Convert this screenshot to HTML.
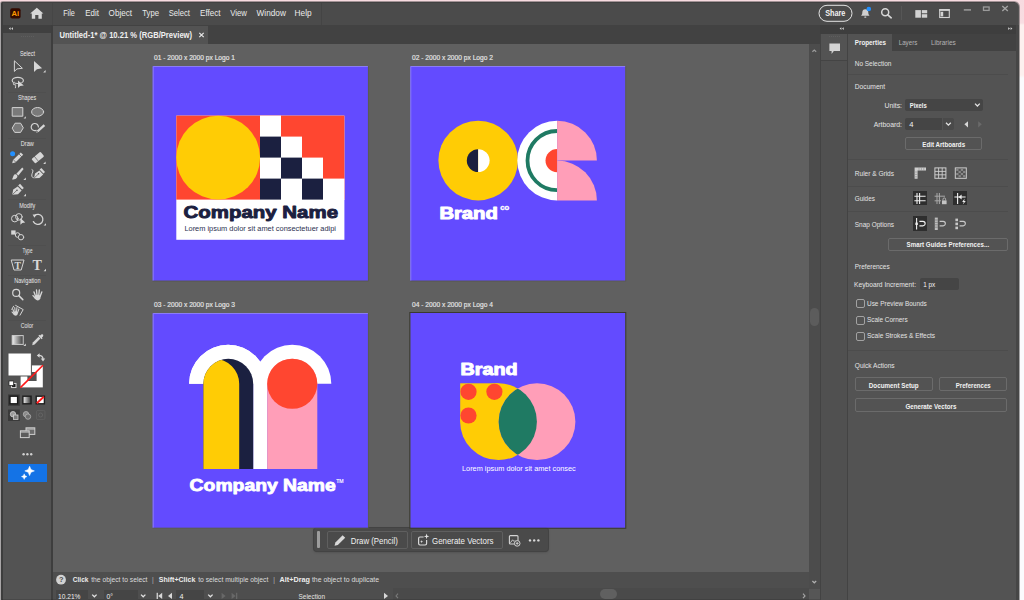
<!DOCTYPE html>
<html lang="en">
<head>
<meta charset="utf-8">
<title>Untitled-1* @ 10.21 % (RGB/Preview)</title>
<style>
*{box-sizing:border-box;margin:0;padding:0}
html,body{width:1024px;height:600px;overflow:hidden}
body{font-family:'Liberation Sans',sans-serif;background:#fff}
#app{position:relative;width:1024px;height:600px;overflow:hidden;
 background:linear-gradient(180deg,#f7dbe0 0px,#f8dde2 23px,#fdf0ef 25px,#fdf0ef 75px,#fbfbfd 78px,#fbfbfd 600px)}
.b{position:absolute}
.abs{position:absolute}
svg text{white-space:pre}
</style>
</head>
<body>
<div id="app">
<div id="win" class="b" style="left:1px;top:2px;width:1018px;height:598px;background:#535353;border-radius:2px 5px 0 0;box-shadow:0 0 0 1px rgba(60,60,60,.45)"></div>
<div class="b" style="left:0px;top:3px;width:1px;height:597px;background:#a9a6a7;"></div>
<div class="b" style="left:2px;top:3px;width:1016px;height:22px;background:#4b4b4b;border-radius:1px 4px 0 0"></div>
<div class="b" style="left:2px;top:2px;width:1013px;height:1px;background:#414141;"></div>
<div class="b" style="left:52px;top:3px;width:1px;height:22px;background:#464646;"></div>
<div class="b" style="left:321px;top:3px;width:1px;height:22px;background:#444444;"></div>
<div class="b" style="left:901px;top:6px;width:1px;height:14px;background:#565656;"></div>
<div class="b" style="left:2px;top:25px;width:50px;height:8px;background:#404040;"></div>
<div class="b" style="left:820px;top:25px;width:198px;height:9px;background:#3e3e3e;"></div>
<div class="b" style="left:52px;top:25px;width:768px;height:19px;background:#424242;"></div>
<div class="b" style="left:53px;top:26px;width:155px;height:18px;background:#535353;"></div>
<div class="b" style="left:2px;top:33px;width:49px;height:567px;background:#535353;"></div>
<div class="b" style="left:51px;top:25px;width:2px;height:575px;background:#3e3e3e;"></div>
<div class="b" style="left:1px;top:2px;width:2px;height:598px;background:#3d3d3d;border-radius:2px 0 0 0"></div>
<div class="b" style="left:53px;top:44px;width:756px;height:528px;background:#606060;"></div>
<div class="b" style="left:809px;top:44px;width:11px;height:545px;background:#4c4c4c;"></div>
<div class="b" style="left:810px;top:308px;width:9px;height:18px;background:#5c5c5c;border-radius:4.5px"></div>
<div class="b" style="left:53px;top:572px;width:756px;height:17px;background:#4e4e4e;"></div>
<div class="b" style="left:53px;top:589px;width:767px;height:11px;background:#4e4e4e;"></div>
<div class="b" style="left:393px;top:588px;width:416px;height:12px;background:#4a4a4a;"></div>
<div class="b" style="left:809px;top:589px;width:11px;height:11px;background:#565656;"></div>
<div class="b" style="left:600px;top:589.2px;width:17px;height:10px;background:#606060;border-radius:5px"></div>
<div class="b" style="left:2px;top:599px;width:1016px;height:1px;background:rgba(0,0,0,.12);"></div>
<div class="b" style="left:56px;top:590px;width:32px;height:10px;background:#454545;"></div>
<div class="b" style="left:104px;top:590px;width:34px;height:10px;background:#454545;"></div>
<div class="b" style="left:176px;top:590px;width:28px;height:10px;background:#454545;"></div>
<div class="b" style="left:820px;top:34px;width:1px;height:566px;background:#434343;"></div>
<div class="b" style="left:821px;top:34px;width:26px;height:566px;background:#505050;"></div>
<div class="b" style="left:821px;top:34px;width:26px;height:26px;background:#535353;"></div>
<div class="b" style="left:821px;top:60px;width:26px;height:1px;background:#444444;"></div>
<div class="b" style="left:847px;top:34px;width:1px;height:566px;background:#434343;"></div>
<div class="b" style="left:848px;top:34px;width:168px;height:566px;background:#535353;"></div>
<div class="b" style="left:848px;top:34px;width:168px;height:17px;background:#424242;"></div>
<div class="b" style="left:848px;top:34px;width:44px;height:18px;background:#535353;"></div>
<div class="b" style="left:1016px;top:25px;width:3px;height:575px;background:#464646;"></div>
<div class="b" style="left:848px;top:74px;width:160px;height:1px;background:#4c4c4c;"></div>
<div class="b" style="left:848px;top:159px;width:160px;height:1px;background:#4c4c4c;"></div>
<div class="b" style="left:848px;top:186px;width:160px;height:1px;background:#4c4c4c;"></div>
<div class="b" style="left:848px;top:211px;width:160px;height:1px;background:#4c4c4c;"></div>
<div class="b" style="left:848px;top:350px;width:160px;height:1px;background:#4c4c4c;"></div>
<div class="b" style="left:905px;top:99px;width:78px;height:12px;background:#454545;border-radius:2px"></div>
<div class="b" style="left:905px;top:118px;width:37px;height:12px;background:#454545;border-radius:2px 0 0 2px"></div>
<div class="b" style="left:943px;top:118px;width:11px;height:12px;background:#4a4a4a;border-radius:0 2px 2px 0"></div>
<div class="b" style="left:920px;top:278px;width:39px;height:12px;background:#454545;border-radius:2px"></div>
<div class="b" style="left:905px;top:137px;width:77px;height:13px;background:transparent;border:1px solid #6b6b6b;border-radius:2px"></div>
<div class="b" style="left:888px;top:238px;width:120px;height:13px;background:transparent;border:1px solid #6b6b6b;border-radius:2px"></div>
<div class="b" style="left:855px;top:377px;width:78px;height:14px;background:transparent;border:1px solid #6b6b6b;border-radius:2px"></div>
<div class="b" style="left:939px;top:377px;width:68px;height:14px;background:transparent;border:1px solid #6b6b6b;border-radius:2px"></div>
<div class="b" style="left:855px;top:398px;width:152px;height:14px;background:transparent;border:1px solid #6b6b6b;border-radius:2px"></div>
<div class="b" style="left:856px;top:299px;width:9px;height:9px;background:transparent;border:1px solid #a2a2a2;border-radius:2px"></div>
<div class="b" style="left:856px;top:315.5px;width:9px;height:9px;background:transparent;border:1px solid #a2a2a2;border-radius:2px"></div>
<div class="b" style="left:856px;top:331.6px;width:9px;height:9px;background:transparent;border:1px solid #a2a2a2;border-radius:2px"></div>
<div class="b" style="left:912.6px;top:190.8px;width:14.4px;height:14.2px;background:#2e2e2e;"></div>
<div class="b" style="left:952.7px;top:190.8px;width:14.4px;height:14.2px;background:#2e2e2e;"></div>
<div class="b" style="left:912.6px;top:216.2px;width:14.4px;height:14.5px;background:#2e2e2e;"></div>
<div class="b" style="left:314px;top:527.6px;width:234px;height:23.4px;background:#4a4a4a;border-radius:3px;box-shadow:0 0 0 1px #434343, 0 1px 3px rgba(0,0,0,.25)"></div>
<div class="b" style="left:317px;top:531px;width:3px;height:17px;background:#9c9c9c;border-radius:1px"></div>
<div class="b" style="left:327px;top:531px;width:81px;height:18px;background:transparent;border:1px solid #5f5f5f;border-radius:2px"></div>
<div class="b" style="left:411px;top:531px;width:92px;height:18px;background:transparent;border:1px solid #5f5f5f;border-radius:2px"></div>
<div class="b" style="left:8px;top:464px;width:39px;height:18px;background:#1473e6;"></div>
<div class="b" style="left:8px;top:92px;width:38px;height:1px;background:#4f4f4f;"></div>
<div class="b" style="left:8px;top:138px;width:38px;height:1px;background:#4f4f4f;"></div>
<div class="b" style="left:8px;top:199px;width:38px;height:1px;background:#4f4f4f;"></div>
<div class="b" style="left:8px;top:245px;width:38px;height:1px;background:#4f4f4f;"></div>
<div class="b" style="left:8px;top:275px;width:38px;height:1px;background:#4f4f4f;"></div>
<div class="b" style="left:8px;top:320px;width:38px;height:1px;background:#4f4f4f;"></div>
<div class="b" style="left:53px;top:44px;width:756px;height:528px;overflow:hidden">
<svg class="abs" style="left:0;top:0" width="756" height="528" viewBox="53 44 756 528" font-family="'Liberation Sans',sans-serif">
      <!-- artboards -->
      <g fill="#634bff">
        <rect x="152.7" y="66" width="215.3" height="214.7"/>
        <rect x="410.3" y="66" width="215" height="214.7"/>
        <rect x="152.7" y="313" width="215.3" height="214.8"/>
        <rect x="410.3" y="313" width="215" height="214.8"/>
      </g>
      <g fill="none" stroke="#8b7cf6" stroke-width="1">
        <path d="M153.2 280.7 V66.5 H368"/>
        <path d="M410.8 280.7 V66.5 H625.3"/>
        <path d="M153.2 527.8 V313.5 H368"/>
      </g>
      <g fill="none" stroke="#58584e" stroke-width="0.8" opacity=".8">
        <path d="M368.4 66 V281.1 H152.7"/>
        <path d="M625.7 66 V281.1 H410.3"/>
        <path d="M368.4 313 V528.2 H152.7"/>
      </g>
      <rect x="409.8" y="312.5" width="216" height="215.8" fill="none" stroke="#3a3a30" stroke-width="1"/>
      <g font-size="6.4" fill="#e6e6e6" stroke="#e6e6e6" stroke-width="0.15">
        <text x="154" y="60" textLength="81" lengthAdjust="spacingAndGlyphs">01 - 2000 x 2000 px Logo 1</text>
        <text x="412" y="60" textLength="81" lengthAdjust="spacingAndGlyphs">02 - 2000 x 2000 px Logo 2</text>
        <text x="154" y="307" textLength="81" lengthAdjust="spacingAndGlyphs">03 - 2000 x 2000 px Logo 3</text>
        <text x="412" y="307" textLength="81" lengthAdjust="spacingAndGlyphs">04 - 2000 x 2000 px Logo 4</text>
      </g>

      <!-- LOGO 1 -->
      <g>
        <rect x="176.3" y="115.6" width="168.1" height="124.2" fill="#ffffff"/>
        <rect x="176.3" y="115.6" width="168.1" height="84" fill="#ff4630"/>
        <circle cx="218.2" cy="157.6" r="41.9" fill="#ffcc05"/>
        <g fill="#ffffff">
          <rect x="260" y="115.6" width="21" height="84.4"/>
          <rect x="281" y="136.6" width="21" height="63.4"/>
          <rect x="302" y="157.6" width="21" height="42.4"/>
          <rect x="323" y="178.6" width="21.4" height="21.4"/>
        </g>
        <g fill="#1b2040">
          <rect x="260" y="136.6" width="21" height="21"/>
          <rect x="281" y="157.6" width="21" height="21"/>
          <rect x="260" y="178.6" width="21" height="21"/>
          <rect x="302" y="178.6" width="21" height="21"/>
        </g>
        <text x="183.6" y="217.6" font-size="16.8" font-weight="bold" fill="#1b2040" stroke="#1b2040" stroke-width="0.9" stroke-linejoin="round" textLength="154.4" lengthAdjust="spacingAndGlyphs">Company Name</text>
        <text x="184.4" y="231" font-size="6.8" fill="#2c3050" textLength="151.6" lengthAdjust="spacingAndGlyphs">Lorem ipsum dolor sit amet consectetuer adipi</text>
      </g>

      <!-- LOGO 2 -->
      <g>
        <circle cx="478.2" cy="160.6" r="39.8" fill="#ffcc05"/>
        <path d="M478.2 149.2 A11.4 11.4 0 0 0 478.2 172 Z" fill="#1b2040"/>
        <path d="M478.2 149.2 A11.4 11.4 0 0 1 478.2 172 Z" fill="#ffffff"/>
        <path d="M557.1 120.8 A39.8 39.8 0 0 0 557.1 200.4 Z" fill="#ffffff"/>
        <path d="M557.1 131 A29.6 29.6 0 0 0 557.1 190.2" fill="none" stroke="#1f7a63" stroke-width="3.8"/>
        <path d="M557.1 149 A11.6 11.6 0 0 0 557.1 172.2 Z" fill="#ff4630"/>
        <path d="M557.1 120.8 A39.8 39.8 0 0 1 596.9 160.6 L557.1 160.6 Z" fill="#ff9eb8"/>
        <path d="M557.1 160.6 A39.8 39.8 0 0 1 596.9 200.4 L557.1 200.4 Z" fill="#ff9eb8"/>
        <text x="439.4" y="218.9" font-size="16.4" font-weight="bold" fill="#ffffff" stroke="#ffffff" stroke-width="1" stroke-linejoin="round" textLength="58.4" lengthAdjust="spacingAndGlyphs">Brand</text>
        <text x="500.2" y="210.3" font-size="6.4" font-weight="bold" fill="#ffffff" stroke="#ffffff" stroke-width="0.3" textLength="9" lengthAdjust="spacingAndGlyphs">co</text>
      </g>

      <!-- LOGO 3 -->
      <g>
        <defs>
          <clipPath id="doorL"><path d="M203.4 469 L203.4 383.75 A24.9 24.9 0 0 1 253.2 383.75 L253.2 469 Z"/></clipPath>
        </defs>
        <path d="M189.1 383.75 A39.05 39.05 0 0 1 267.2 383.75 L267.2 469 L253.2 469 L253.2 383.75 Z" fill="#ffffff"/>
        <path d="M253.2 383.75 A39.05 39.05 0 0 1 331.3 383.75 L253.2 383.75 Z" fill="#ffffff"/>
        <path d="M189.1 383.75 A39.05 39.05 0 0 1 267.2 383.75 Z" fill="#ffffff"/>
        <path d="M203.4 469 L203.4 383.75 A24.9 24.9 0 0 1 253.2 383.75 L253.2 469 Z" fill="#1b2040"/>
        <path d="M189.4 469 L189.4 383.75 A24.9 24.9 0 0 1 239.2 383.75 L239.2 469 Z" fill="#ffcc05" clip-path="url(#doorL)"/>
        <path d="M267.2 469 L267.2 383.75 A25.05 25.05 0 0 1 317.3 383.75 L317.3 469 Z" fill="#ff9eb8"/>
        <circle cx="292.25" cy="383.75" r="25.05" fill="#ff4630"/>
        <text x="189.6" y="490.6" font-size="15.6" font-weight="bold" fill="#ffffff" stroke="#ffffff" stroke-width="0.8" stroke-linejoin="round" textLength="146.2" lengthAdjust="spacingAndGlyphs">Company Name</text>
        <text x="336.2" y="483.2" font-size="4.8" fill="#ffffff" stroke="#ffffff" stroke-width=".15" textLength="7.4" lengthAdjust="spacingAndGlyphs">TM</text>
      </g>

      <!-- LOGO 4 -->
      <g>
        <defs><clipPath id="yc"><circle cx="498.5" cy="421.7" r="38.4"/></clipPath></defs>
        <rect x="460.2" y="383.3" width="38.3" height="38.4" fill="#ffcc05"/>
        <circle cx="498.5" cy="421.7" r="38.4" fill="#ffcc05"/>
        <circle cx="537" cy="421.7" r="38.4" fill="#ff9eb8"/>
        <circle cx="537" cy="421.7" r="38.4" fill="#1f7a63" clip-path="url(#yc)"/>
        <circle cx="468.5" cy="391.8" r="8.1" fill="#ff4630"/>
        <circle cx="494.4" cy="391.8" r="8.1" fill="#ff4630"/>
        <circle cx="468.5" cy="415.5" r="8.1" fill="#ff4630"/>
        <text x="460.6" y="375.4" font-size="16.2" font-weight="bold" fill="#ffffff" stroke="#ffffff" stroke-width="1" stroke-linejoin="round" textLength="57" lengthAdjust="spacingAndGlyphs">Brand</text>
        <text x="462" y="470.6" font-size="6.6" fill="#ffffff" textLength="113.7" lengthAdjust="spacingAndGlyphs">Lorem ipsum dolor sit amet consec</text>
      </g>
    </svg>
</div>
<svg id="ov" class="b" style="left:0;top:0" width="1024" height="600" viewBox="0 0 1024 600" font-family="'Liberation Sans',sans-serif">
<text x="63.2" y="16.36" font-size="9.6" fill="#eaeaea" textLength="11.700000000000003" lengthAdjust="spacingAndGlyphs" >File</text>
<text x="85.2" y="16.36" font-size="9.6" fill="#eaeaea" textLength="13.700000000000003" lengthAdjust="spacingAndGlyphs" >Edit</text>
<text x="108.6" y="16.36" font-size="9.6" fill="#eaeaea" textLength="23.400000000000006" lengthAdjust="spacingAndGlyphs" >Object</text>
<text x="142.3" y="16.36" font-size="9.6" fill="#eaeaea" textLength="16.69999999999999" lengthAdjust="spacingAndGlyphs" >Type</text>
<text x="168.7" y="16.36" font-size="9.6" fill="#eaeaea" textLength="21.30000000000001" lengthAdjust="spacingAndGlyphs" >Select</text>
<text x="200" y="16.36" font-size="9.6" fill="#eaeaea" textLength="20.5" lengthAdjust="spacingAndGlyphs" >Effect</text>
<text x="230.2" y="16.36" font-size="9.6" fill="#eaeaea" textLength="16.700000000000017" lengthAdjust="spacingAndGlyphs" >View</text>
<text x="256.6" y="16.36" font-size="9.6" fill="#eaeaea" textLength="29.299999999999955" lengthAdjust="spacingAndGlyphs" >Window</text>
<text x="294.6" y="16.36" font-size="9.6" fill="#eaeaea" textLength="17.0" lengthAdjust="spacingAndGlyphs" >Help</text>
<text x="59.4" y="38.30" font-size="8.6" fill="#f0f0f0" textLength="132.7" lengthAdjust="spacingAndGlyphs" font-weight="bold" >Untitled-1* @ 10.21 % (RGB/Preview)</text>
<path d="M199.3 32.8 L203.7 37.2 M203.7 32.8 L199.3 37.2" stroke="#e6e6e6" stroke-width="1.2" fill="none"/>
<rect x="819" y="5.3" width="33" height="16" rx="8" fill="none" stroke="#e4e4e4" stroke-width="1"/>
<text x="825.2" y="16.40" font-size="8.6" fill="#f2f2f2" textLength="20.2" lengthAdjust="spacingAndGlyphs" font-weight="bold" >Share</text>
<text x="20" y="55.58" font-size="6.6" fill="#e8e8e8" textLength="15" lengthAdjust="spacingAndGlyphs" >Select</text>
<text x="18" y="99.78" font-size="6.6" fill="#e8e8e8" textLength="18.299999999999997" lengthAdjust="spacingAndGlyphs" >Shapes</text>
<text x="20.8" y="146.08" font-size="6.6" fill="#e8e8e8" textLength="12.999999999999996" lengthAdjust="spacingAndGlyphs" >Draw</text>
<text x="19.2" y="207.68" font-size="6.6" fill="#e8e8e8" textLength="16.099999999999998" lengthAdjust="spacingAndGlyphs" >Modify</text>
<text x="22.5" y="253.18" font-size="6.6" fill="#e8e8e8" textLength="10.0" lengthAdjust="spacingAndGlyphs" >Type</text>
<text x="14.2" y="283.18" font-size="6.6" fill="#e8e8e8" textLength="26.3" lengthAdjust="spacingAndGlyphs" >Navigation</text>
<text x="20.8" y="327.78" font-size="6.6" fill="#e8e8e8" textLength="12.499999999999996" lengthAdjust="spacingAndGlyphs" >Color</text>
<text x="854.8" y="45.34" font-size="7.6" fill="#f2f2f2" textLength="31.1" lengthAdjust="spacingAndGlyphs" font-weight="bold" >Properties</text>
<text x="898.7" y="45.34" font-size="7.6" fill="#b4b4b4" textLength="18.7" lengthAdjust="spacingAndGlyphs" >Layers</text>
<text x="930.9" y="45.34" font-size="7.6" fill="#b4b4b4" textLength="24.9" lengthAdjust="spacingAndGlyphs" >Libraries</text>
<text x="854.8" y="66.04" font-size="7.6" fill="#e4e4e4" textLength="36.5" lengthAdjust="spacingAndGlyphs" >No Selection</text>
<text x="854.8" y="89.24" font-size="7.6" fill="#e4e4e4" textLength="30.4" lengthAdjust="spacingAndGlyphs" >Document</text>
<text x="884.5" y="107.74" font-size="7.6" fill="#e4e4e4" textLength="17.5" lengthAdjust="spacingAndGlyphs" >Units:</text>
<text x="909.7" y="107.74" font-size="7.6" fill="#f4f4f4" textLength="17.1" lengthAdjust="spacingAndGlyphs" font-weight="bold" >Pixels</text>
<text x="873.7" y="127.04" font-size="7.6" fill="#e4e4e4" textLength="28.3" lengthAdjust="spacingAndGlyphs" >Artboard:</text>
<text x="909.3" y="127.04" font-size="7.6" fill="#f4f4f4"  >4</text>
<text x="922.3" y="146.84" font-size="7.6" fill="#f2f2f2" textLength="42.8" lengthAdjust="spacingAndGlyphs" font-weight="bold" >Edit Artboards</text>
<text x="854.8" y="175.74" font-size="7.6" fill="#e4e4e4" textLength="39.2" lengthAdjust="spacingAndGlyphs" >Ruler &amp; Grids</text>
<text x="854.8" y="201.14" font-size="7.6" fill="#e4e4e4" textLength="20" lengthAdjust="spacingAndGlyphs" >Guides</text>
<text x="854.8" y="226.74" font-size="7.6" fill="#e4e4e4" textLength="39.2" lengthAdjust="spacingAndGlyphs" >Snap Options</text>
<text x="906.6" y="247.34" font-size="7.6" fill="#f2f2f2" textLength="82.5" lengthAdjust="spacingAndGlyphs" font-weight="bold" >Smart Guides Preferences...</text>
<text x="854.8" y="269.14" font-size="7.6" fill="#e4e4e4" textLength="34.9" lengthAdjust="spacingAndGlyphs" >Preferences</text>
<text x="854" y="287.14" font-size="7.6" fill="#e4e4e4" textLength="62" lengthAdjust="spacingAndGlyphs" >Keyboard Increment:</text>
<text x="923.2" y="287.14" font-size="7.6" fill="#f4f4f4" textLength="12" lengthAdjust="spacingAndGlyphs" >1 px</text>
<text x="867" y="306.24" font-size="7.6" fill="#e4e4e4" textLength="59.8" lengthAdjust="spacingAndGlyphs" >Use Preview Bounds</text>
<text x="867" y="322.04" font-size="7.6" fill="#e4e4e4" textLength="40.7" lengthAdjust="spacingAndGlyphs" >Scale Corners</text>
<text x="867" y="338.44" font-size="7.6" fill="#e4e4e4" textLength="68.1" lengthAdjust="spacingAndGlyphs" >Scale Strokes &amp; Effects</text>
<text x="854.8" y="368.34" font-size="7.6" fill="#e4e4e4" textLength="39.8" lengthAdjust="spacingAndGlyphs" >Quick Actions</text>
<text x="868.8" y="387.84" font-size="7.6" fill="#f2f2f2" textLength="49.9" lengthAdjust="spacingAndGlyphs" font-weight="bold" >Document Setup</text>
<text x="955.8" y="387.84" font-size="7.6" fill="#f2f2f2" textLength="34.9" lengthAdjust="spacingAndGlyphs" font-weight="bold" >Preferences</text>
<text x="905.4" y="408.84" font-size="7.6" fill="#f2f2f2" textLength="51.1" lengthAdjust="spacingAndGlyphs" font-weight="bold" >Generate Vectors</text>
<text x="72.8" y="582.26" font-size="7.4" fill="#ececec" textLength="15.6" lengthAdjust="spacingAndGlyphs" font-weight="bold" >Click</text>
<text x="91.2" y="582.26" font-size="7.4" fill="#dcdcdc" textLength="56.2" lengthAdjust="spacingAndGlyphs" >the object to select</text>
<text x="152.3" y="582.26" font-size="7.4" fill="#dcdcdc" textLength="1.2" lengthAdjust="spacingAndGlyphs" >|</text>
<text x="158.75" y="582.26" font-size="7.4" fill="#ececec" textLength="36.55" lengthAdjust="spacingAndGlyphs" font-weight="bold" >Shift+Click</text>
<text x="198.2" y="582.26" font-size="7.4" fill="#dcdcdc" textLength="70.1" lengthAdjust="spacingAndGlyphs" >to select multiple object</text>
<text x="273.6" y="582.26" font-size="7.4" fill="#dcdcdc" textLength="1.2" lengthAdjust="spacingAndGlyphs" >|</text>
<text x="279.6" y="582.26" font-size="7.4" fill="#ececec" textLength="30.3" lengthAdjust="spacingAndGlyphs" font-weight="bold" >Alt+Drag</text>
<text x="311.9" y="582.26" font-size="7.4" fill="#dcdcdc" textLength="67.1" lengthAdjust="spacingAndGlyphs" >the object to duplicate</text>
<text x="58.1" y="598.59" font-size="7.2" fill="#f0f0f0" textLength="22.4" lengthAdjust="spacingAndGlyphs" >10.21%</text>
<text x="106.4" y="598.59" font-size="7.2" fill="#f0f0f0" textLength="6.5" lengthAdjust="spacingAndGlyphs" >0°</text>
<text x="179.6" y="598.59" font-size="7.2" fill="#f0f0f0"  >4</text>
<text x="298.6" y="598.59" font-size="7.2" fill="#e4e4e4" textLength="26.4" lengthAdjust="spacingAndGlyphs" >Selection</text>
<text x="350.8" y="543.50" font-size="8.6" fill="#f0f0f0" textLength="47" lengthAdjust="spacingAndGlyphs" >Draw (Pencil)</text>
<text x="432" y="543.50" font-size="8.6" fill="#f0f0f0" textLength="61.5" lengthAdjust="spacingAndGlyphs" >Generate Vectors</text>
<!-- ===== app logo + home ===== -->
<rect x="10.2" y="8.2" width="10.4" height="10.2" rx="2" fill="#330a00"/>
<text x="11.6" y="16" font-size="6.6" font-weight="bold" fill="#ff9a00" textLength="7.6" lengthAdjust="spacingAndGlyphs">Ai</text>
<path d="M36.8 7.8 L43.4 13.6 L41.8 13.6 L41.8 18.8 L38.4 18.8 L38.4 15 L35.2 15 L35.2 18.8 L31.8 18.8 L31.8 13.6 L30.2 13.6 Z" fill="#d6d6d6"/>
<!-- collapse arrows -->
<path d="M10.6 27.2 L8.8 28.6 L10.6 30 Z M13 27.2 L11.2 28.6 L13 30 Z" fill="#d0d0d0"/>
<path d="M841.4 27.2 L839.6 28.6 L841.4 30 Z M843.8 27.2 L842 28.6 L843.8 30 Z" fill="#d0d0d0"/>
<path d="M1008.2 27.2 L1010 28.6 L1008.2 30 Z M1010.6 27.2 L1012.4 28.6 L1010.6 30 Z" fill="#d0d0d0"/>
<!-- grips -->
<path d="M21 36.5 H34" stroke="#5e5e5e" stroke-width="1" stroke-dasharray="1 1"/>
<path d="M829 36.5 H840" stroke="#5e5e5e" stroke-width="1" stroke-dasharray="1 1"/>

<!-- ===== top right icons ===== -->
<path d="M865.3 9.2 C867.6 9.2 868.3 11 868.3 12.6 C868.3 14.4 869 15.2 869.6 15.8 L861 15.8 C861.6 15.2 862.3 14.4 862.3 12.6 C862.3 11 863 9.2 865.3 9.2 Z" fill="#cfcfcf"/>
<rect x="864.2" y="16.4" width="2.2" height="1.3" rx=".6" fill="#cfcfcf"/>
<circle cx="868.8" cy="9" r="2.3" fill="#2390ff"/>
<circle cx="885.2" cy="12.2" r="3.5" fill="none" stroke="#d6d6d6" stroke-width="1.5"/>
<path d="M887.8 14.8 L891.2 17.8" stroke="#d6d6d6" stroke-width="1.7" stroke-linecap="round"/>
<g fill="#d2d2d2">
  <rect x="915.3" y="10.1" width="5.6" height="7.6"/>
  <rect x="921.8" y="10.1" width="5.4" height="3.2"/>
  <rect x="921.8" y="14.2" width="5.4" height="3.5"/>
</g>
<rect x="939.7" y="9.9" width="9.6" height="7.6" fill="none" stroke="#d2d2d2" stroke-width="1.1"/>
<rect x="939.2" y="9" width="10.6" height="1.8" fill="#d2d2d2"/>
<rect x="940.6" y="11.8" width="2.6" height="4.6" fill="#d2d2d2"/>
<rect x="963.8" y="9" width="7.2" height="1.8" fill="#8e8e8e"/>
<rect x="983.5" y="7" width="5.6" height="3.4" fill="none" stroke="#9a9a9a" stroke-width="1.3"/>
<path d="M1002.3 6 L1007.8 11 M1007.8 6 L1002.3 11" stroke="#a4a4a4" stroke-width="1.4" fill="none"/>

<!-- comment icon in collapsed strip -->
<path d="M829.4 43.6 H840 V51 H833.8 L831.6 54 V51 H829.4 Z" fill="#d4d4d4"/>

<!-- ===== scroll arrows ===== -->
<path d="M812.4 51.8 L814.3 50 L816.2 51.8" stroke="#9a9a9a" stroke-width="1.2" fill="none"/>
<path d="M812.4 581 L814.3 582.8 L816.2 581" stroke="#b0b0b0" stroke-width="1.2" fill="none"/>

<!-- ===== TOOLBAR ===== -->
<g fill="none" stroke="#d4d4d4" stroke-width="1" stroke-linejoin="round" stroke-linecap="round">
  <!-- selection (outline arrow) -->
  <path d="M14.4 61.2 L14.4 71.4 L17 68.9 L22 68.3 Z"/>
  <!-- lasso -->
  <ellipse cx="17.8" cy="80.4" rx="5.6" ry="3.1" stroke-width="1.15"/>
  <path d="M14.2 82.4 C12.6 83.4 13.2 85.4 15 84.6 C16 84.2 15.6 86.8 15.4 87.8"/>
  <!-- rectangle -->
  <rect x="12.6" y="107.6" width="10.2" height="8.6" fill="#7a7a7a"/>
  <!-- ellipse -->
  <ellipse cx="37.6" cy="111.9" rx="6" ry="4.4" fill="#7a7a7a"/>
  <!-- polygon -->
  <path d="M12.4 127.8 L15.1 123.2 L20.6 123.2 L23.3 127.8 L20.6 132.4 L15.1 132.4 Z" fill="#7a7a7a"/>
  <!-- shaper arc -->
  <path d="M36.2 130.4 A3.6 3.6 0 1 1 38.4 127" stroke-width="1.2"/>
  <!-- shape builder circles -->
  <circle cx="14.8" cy="218.6" r="3.3"/>
  <circle cx="18.9" cy="216.9" r="3.3"/>
  <!-- rotate -->
  <path d="M34.6 215.6 A5 5 0 1 1 33.4 221.6" stroke-width="1.3"/>
  <!-- blend -->
  <circle cx="17.6" cy="235" r="2.3"/>
  <circle cx="21" cy="237.2" r="2.7" fill="#535353"/>
  <!-- touch type trapezoid -->
  <path d="M11.6 260 L24 260 L21.2 270 L14.4 270 Z"/>
  <!-- zoom -->
  <circle cx="16.2" cy="292.9" r="3.5" stroke-width="1.2"/>
  <path d="M18.8 295.6 L22.8 299.6" stroke-width="1.5"/>
  <!-- rotate view square -->
  <path d="M15.6 305.4 L23.2 309.6 L20 315.2" />
  <path d="M11.8 309.4 L13.6 306.2" />
</g>
<g fill="#d6d6d6">
  <!-- direct selection -->
  <path d="M34 61.1 L34 71.9 L36.9 69.2 L42.1 68.3 Z"/>
  <!-- lasso arrow -->
  <path d="M18 80.4 L18 88 L20.1 86.1 L23.8 85.6 Z"/>
  <!-- shaper pencil -->
  <path d="M36.3 132.8 L36.9 130.4 L43.6 124.2 L45.2 125.9 L38.5 132.1 Z"/>
  <!-- pencil -->
  <path d="M12.2 163.2 L13 160 L20.8 152.4 L23.2 154.8 L15.4 162.4 Z"/>
  <!-- eraser -->
  <path d="M32.2 158.4 L39.6 152.2 Q40.4 151.6 41.1 152.4 L43.6 155.4 Q44.2 156.2 43.4 156.9 L36 163 Q35.2 163.6 34.6 162.8 L32 159.8 Q31.5 159 32.2 158.4 Z"/>
  <!-- paintbrush -->
  <path d="M22.2 167.6 L23.6 168.9 L18.4 175.4 L16.4 173.7 Z"/>
  <path d="M12 179.2 C13.2 178.4 12.8 176 14.4 174.6 C16 173.4 18.2 175.2 17.2 177.2 C16 179.2 13.6 179.8 12 179.2 Z"/>
  <!-- curvature pen nib -->
  <path d="M34 178.2 L35 173.6 L39.4 170.4 L43.2 174.6 L39.4 178 Z"/>
  <path d="M39.6 169.6 L41.4 168 L45 172 L43.4 173.6 Z"/>
  <!-- pen nib -->
  <path d="M12.2 194.8 L13.2 189.6 L17.8 186.4 L21.6 190.4 L18 194.2 Z"/>
  <path d="M18.2 185.4 L20 183.8 L23.8 188 L22.2 189.6 Z"/>
  <!-- shape builder arrow -->
  <path d="M20.4 218 L20.4 224.8 L22.3 223.1 L25.2 222.4 Z"/>
  <!-- rotate arrowhead -->
  <path d="M32.6 214.4 L36.6 214.6 L34.4 217.8 Z"/>
  <!-- blend square -->
  <rect x="11.2" y="230.4" width="4.4" height="4.2"/>
  <!-- hand -->
  <!-- rotate view hand -->
  <!-- eyedropper -->
  <path d="M32.2 345.2 L32.8 342.6 L38.6 336.8 L40.4 338.6 L34.6 344.4 Z"/>
  <path d="M38.4 335.8 L39.4 334.8 L40.2 335.6 L41.2 334.4 Q42.2 333.8 43 334.6 Q43.6 335.4 43 336.4 L41.9 337.4 L42.6 338.2 L41.6 339.2 Z"/>
  <!-- small flyout markers -->
  <path d="M45.6 70 L45.6 72.4 L43.2 72.4 Z"/>
  <path d="M25.8 116.2 L25.8 118.4 L23.6 118.4 Z"/>
  <path d="M45.6 161.6 L45.6 164 L43.2 164 Z"/>
  <path d="M25.8 177.6 L25.8 180 L23.4 180 Z"/>
  <path d="M26 193.8 L26 196.2 L23.6 196.2 Z"/>
  <path d="M46 223.2 L46 225.6 L43.6 225.6 Z"/>
  <path d="M46 268.8 L46 271.2 L43.6 271.2 Z"/>
  <path d="M25.8 343.6 L25.8 346 L23.4 346 Z"/>
</g>
<g fill="none" stroke="#535353" stroke-width=".7" stroke-linecap="round">
  <path d="M13.4 159.8 L15.8 162.2 M19 154 L21.6 156.6"/>
  <path d="M34.4 156.4 L37.8 160.6"/>
  <path d="M12.6 194.4 L16.6 190.6"/>
  <path d="M34.4 177.8 L38.2 174.2"/>
  <path d="M36.8 131 L38.2 132.4"/>
  <path d="M335.8 542.2 L338.2 544.6 M341 536.8 L343.6 539.4"/>
</g>
<circle cx="17" cy="190.2" r=".8" fill="#535353"/>
<circle cx="38.6" cy="173.8" r=".8" fill="#535353"/>
<!-- hand tool -->
<g id="handshape">
  <path d="M34.6 296 Q37.6 293.6 40.8 296 L40.4 298.2 Q39.6 300.4 37.6 300.4 Q35.6 300.4 34.8 298.6 Z" fill="#d6d6d6"/>
  <g fill="none" stroke="#d6d6d6" stroke-width="1.35" stroke-linecap="round">
    <path d="M35.5 296 L34 291.9"/>
    <path d="M37 295.2 L36.5 290"/>
    <path d="M38.8 295.2 L39.3 290"/>
    <path d="M40.3 296 L41.8 291.9"/>
    <path d="M35.2 298 L33 295.6"/>
  </g>
</g>
<use href="#handshape" transform="translate(15.6 311.8) scale(.78) translate(-37.6 -295.4)"/>
<!-- curvature pen squiggle -->
<path d="M31.6 169.4 C33.6 169.8 33 171.6 32.2 173.4 C31.4 175.4 31.6 177.6 33.8 177.8" fill="none" stroke="#d4d4d4" stroke-width="1"/>
<!-- pencil active dot -->
<circle cx="12.6" cy="153.7" r="2.5" fill="#2390ff"/>
<!-- type tools -->
<text x="14.6" y="268.6" font-family="'Liberation Serif',serif" font-size="9.4" font-weight="bold" fill="#d8d8d8" textLength="6.4" lengthAdjust="spacingAndGlyphs">T</text>
<text x="32.6" y="269.8" font-family="'Liberation Serif',serif" font-size="14" font-weight="bold" fill="#d8d8d8" textLength="9.4" lengthAdjust="spacingAndGlyphs">T</text>
<!-- gradient tool -->
<defs>
  <linearGradient id="gr1" x1="0" y1="0" x2="1" y2="0"><stop offset="0" stop-color="#f2f2f2"/><stop offset="1" stop-color="#3c3c3c"/></linearGradient>
  <linearGradient id="gr2" x1="0" y1="0" x2="1" y2="0"><stop offset="0" stop-color="#fafafa"/><stop offset="1" stop-color="#2e2e2e"/></linearGradient>
</defs>
<rect x="12.2" y="335.6" width="11" height="8.8" fill="url(#gr1)" stroke="#cfcfcf" stroke-width="1"/>
<!-- fill / stroke -->
<rect x="20.6" y="365.4" width="22.2" height="22" fill="#ffffff"/>
<rect x="27.4" y="372" width="9.2" height="9" fill="#535353"/>
<rect x="8" y="353" width="23.4" height="23" fill="#ffffff" stroke="#535353" stroke-width="1"/>
<path d="M20.4 387.6 L43 365.2" stroke="#ff1a1a" stroke-width="1.6"/>
<!-- swap arrow -->
<path d="M38.2 355.4 C41.4 355.2 43 356.6 43 359.6" fill="none" stroke="#d4d4d4" stroke-width="1.4"/>
<path d="M39.6 353.2 L36.8 355.5 L39.6 357.8 Z M40.8 358.4 L43 361.4 L45.2 358.4 Z" fill="#d4d4d4"/>
<!-- default fill/stroke -->
<rect x="11.6" y="383.4" width="4.4" height="4.2" fill="#1e1e1e" stroke="#e8e8e8" stroke-width=".9"/>
<rect x="9" y="381" width="4.6" height="4.4" fill="#ffffff" stroke="#1e1e1e" stroke-width=".7"/>
<!-- color / gradient / none -->
<rect x="8" y="394.4" width="11.8" height="11.4" fill="#3a3a3a"/>
<rect x="10" y="396.2" width="7.6" height="7.6" fill="#ffffff" stroke="#1a1a1a" stroke-width="1.4"/>
<rect x="22.9" y="396.2" width="8.2" height="7.6" fill="url(#gr2)" stroke="#1e1e1e" stroke-width="1.4"/>
<rect x="36.2" y="396.2" width="8.2" height="7.6" fill="#ffffff" stroke="#1e1e1e" stroke-width="1.4"/>
<path d="M36.8 403.2 L43.8 396.8" stroke="#ff1a1a" stroke-width="1.9"/>
<!-- draw modes -->
<rect x="8" y="409.6" width="11.8" height="11.4" fill="#3a3a3a"/>
<circle cx="13" cy="414.2" r="2.7" fill="#9a9a9a" stroke="#d0d0d0" stroke-width=".8"/>
<rect x="13.4" y="415" width="4.6" height="4.4" fill="#7c7c7c" stroke="#d0d0d0" stroke-width=".8"/>
<circle cx="26" cy="414.2" r="2.7" fill="#8a8a8a" stroke="#b4b4b4" stroke-width=".8"/>
<circle cx="28" cy="416.6" r="2.7" fill="#6e6e6e" stroke="#b4b4b4" stroke-width=".8"/>
<rect x="36.4" y="410.4" width="8.6" height="9.2" rx="1.5" fill="none" stroke="#626262" stroke-width=".8"/>
<circle cx="40.6" cy="415" r="2" fill="none" stroke="#686868" stroke-width=".8"/>
<!-- screen mode -->
<rect x="26" y="427.8" width="8.8" height="6.6" fill="#6c6c6c" stroke="#cfcfcf" stroke-width="1"/>
<rect x="20.4" y="430.8" width="8.8" height="6.8" fill="#5c5c5c" stroke="#cfcfcf" stroke-width="1"/>
<path d="M20.4 432 H29.2 M26 429 H34.8" stroke="#cfcfcf" stroke-width="1.2"/>
<!-- more dots -->
<g fill="#d0d0d0"><circle cx="23.6" cy="454.2" r="1.2"/><circle cx="27.4" cy="454.2" r="1.2"/><circle cx="31.2" cy="454.2" r="1.2"/></g>
<!-- sparkles -->
<path d="M29.6 466.2 L31 469.5 L34.4 470.9 L31 472.3 L29.6 475.6 L28.2 472.3 L24.8 470.9 L28.2 469.5 Z" fill="#ffffff" stroke="#ffffff" stroke-width=".5" stroke-linejoin="round"/>
<path d="M24.2 473.8 L25.1 475.7 L27 476.6 L25.1 477.5 L24.2 479.4 L23.3 477.5 L21.4 476.6 L23.3 475.7 Z" fill="#ffffff" stroke="#ffffff" stroke-width=".4" stroke-linejoin="round"/>

<!-- ===== properties panel icons ===== -->
<!-- chevrons -->
<g fill="none" stroke="#e2e2e2" stroke-width="1.3">
  <path d="M975 103.6 L977.4 106 L979.8 103.6"/>
  <path d="M946 122.8 L948.4 125.2 L950.8 122.8"/>
  <path d="M92.2 594.6 L94.4 596.8 L96.6 594.6"/>
  <path d="M141 594.6 L143.2 596.8 L145.4 594.6"/>
  <path d="M208.2 594.6 L210.4 596.8 L212.6 594.6"/>
</g>
<path d="M968 121.2 L968 127.4 L964.4 124.3 Z" fill="#d8d8d8"/>
<path d="M978.2 121.2 L978.2 127.4 L981.8 124.3 Z" fill="#6a6a6a"/>
<!-- ruler & grids -->
<path d="M914.6 167.4 H926 V170.4 H917.6 V178.8 H914.6 Z" fill="#cfcfcf"/>
<path d="M919 167.4 V170.4 M921.4 167.4 V170.4 M923.8 167.4 V170.4 M914.6 172 H917.6 M914.6 174.4 H917.6 M914.6 176.8 H917.6" stroke="#8a8a8a" stroke-width=".6"/>
<g fill="none" stroke="#cfcfcf" stroke-width="1">
  <rect x="934.9" y="167.9" width="11" height="10.4"/>
  <path d="M938.6 167.9 V178.3 M942.2 167.9 V178.3 M934.9 171.4 H945.9 M934.9 174.8 H945.9" stroke-width=".9"/>
  <rect x="955.3" y="167.9" width="11" height="10.4"/>
</g>
<g fill="#8a8a8a">
  <rect x="956.2" y="168.8" width="2.3" height="2.1"/><rect x="960.8" y="168.8" width="2.3" height="2.1"/>
  <rect x="958.5" y="170.9" width="2.3" height="2.1"/><rect x="963.1" y="170.9" width="2.3" height="2.1"/>
  <rect x="956.2" y="173" width="2.3" height="2.1"/><rect x="960.8" y="173" width="2.3" height="2.1"/>
  <rect x="958.5" y="175.1" width="2.3" height="2.1"/><rect x="963.1" y="175.1" width="2.3" height="2.1"/>
</g>
<!-- guides -->
<g stroke="#f0f0f0" stroke-width="1.1" fill="none">
  <path d="M917 193 V204 M919.6 193 V204 M914.4 196.2 H925.6 M914.4 200.8 H925.6"/>
  <path d="M957.6 193 V204 M954.4 197 H965.6"/>
</g>
<path d="M958.6 197 L961.6 194.6 V199.4 Z" fill="#f0f0f0"/>
<path d="M964.6 198.6 L962.2 202 H963.8 L962.8 204.6 L965.8 201 H964.2 Z" fill="#f0f0f0"/>
<g stroke="#a8a8a8" stroke-width="1" fill="none">
  <path d="M937 193 V204 M939.4 193 V204 M934.6 196.2 H945 M934.6 200.8 H941"/>
</g>
<rect x="942" y="200.4" width="4.6" height="3.8" fill="#c4c4c4"/>
<path d="M943 200.4 V199.2 A1.3 1.3 0 0 1 945.6 199.2 V200.4" fill="none" stroke="#c4c4c4" stroke-width=".8"/>
<!-- snap options -->
<g fill="none" stroke="#f0f0f0" stroke-width="1.3">
  <path d="M916.6 218 V229.6" stroke-width="1.1"/>
  <path d="M919.4 221.3 H922.9 A2.25 2.25 0 0 1 922.9 225.8 H919.4" stroke-width="1.15"/>
</g>
<rect x="915.4" y="222.6" width="2.4" height="2.4" fill="#f0f0f0"/>
<g fill="none" stroke="#c8c8c8" stroke-width="1.3">
  <path d="M939.6 221.3 H943.1 A2.25 2.25 0 0 1 943.1 225.8 H939.6" stroke-width="1.15"/>
  <path d="M959.6 221.3 H963.1 A2.25 2.25 0 0 1 963.1 225.8 H959.6" stroke-width="1.15"/>
</g>
<rect x="934.8" y="217.6" width="3" height="12.4" fill="#bdbdbd"/>
<path d="M934.8 220 H937.8 M934.8 222.4 H937.8 M934.8 224.8 H937.8 M934.8 227.2 H937.8" stroke="#6a6a6a" stroke-width=".6"/>
<g fill="#c8c8c8"><rect x="955.4" y="218.6" width="2.6" height="2.6"/><rect x="955.4" y="222.6" width="2.6" height="2.6"/><rect x="955.4" y="226.6" width="2.6" height="2.6"/></g>

<!-- ===== hint + status bar ===== -->
<circle cx="61" cy="579.7" r="4.9" fill="#d2d2d2"/>
<text x="58.9" y="582.4" font-size="7.4" font-weight="bold" fill="#4a4a4a">?</text>
<g fill="#d8d8d8">
  <rect x="156.6" y="592.8" width="1.3" height="6.2"/>
  <path d="M162.2 592.8 V599 L158.2 595.9 Z"/>
  <path d="M172 592.8 V599 L168 595.9 Z"/>
  <path d="M384 592.8 V599 L388 595.9 Z"/>
</g>
<g fill="#686868">
  <path d="M221.6 592.8 V599 L225.6 595.9 Z"/>
  <path d="M231.6 592.8 V599 L235.6 595.9 Z"/>
  <rect x="236" y="592.8" width="1.3" height="6.2"/>
</g>
<path d="M398 593.6 L396 595.9 L398 598.2" fill="none" stroke="#7a7a7a" stroke-width="1.1"/>
<path d="M803 593.6 L805 595.9 L803 598.2" fill="none" stroke="#a4a4a4" stroke-width="1.2"/>

<!-- ===== contextual task bar icons ===== -->
<path d="M334.6 545.8 L335.4 542.6 L342.6 535.2 L345.2 537.8 L337.8 545 Z" fill="#d8d8d8"/>
<rect x="418.6" y="537" width="8" height="8" rx="1.4" fill="none" stroke="#d8d8d8" stroke-width="1.2"/>
<rect x="423.6" y="534" width="6" height="6" fill="#4a4a4a"/>
<path d="M426.6 533.6 L427.3 535.7 L429.4 536.4 L427.3 537.1 L426.6 539.2 L425.9 537.1 L423.8 536.4 L425.9 535.7 Z" fill="#e4e4e4"/>
<path d="M421.6 540 L422 541.2 L423.2 541.6 L422 542 L421.6 543.2 L421.2 542 L420 541.6 L421.2 541.2 Z" fill="#e4e4e4"/>
<rect x="509.4" y="535.6" width="8.6" height="8.4" rx="1" fill="none" stroke="#d4d4d4" stroke-width="1.1"/>
<path d="M510.4 542.8 L512.6 539.8 L514 541.4 L515 540.4" fill="none" stroke="#d4d4d4" stroke-width=".9"/>
<circle cx="517.2" cy="543.4" r="2.8" fill="#4a4a4a" stroke="#d4d4d4" stroke-width="1"/>
<path d="M515.8 543.4 H518.6 M517.2 542 V544.8" stroke="#d4d4d4" stroke-width=".9"/>
<g fill="#dadada"><circle cx="530" cy="540.4" r="1.2"/><circle cx="534.2" cy="540.4" r="1.2"/><circle cx="538.4" cy="540.4" r="1.2"/></g>

</svg>
</div>
</body>
</html>
